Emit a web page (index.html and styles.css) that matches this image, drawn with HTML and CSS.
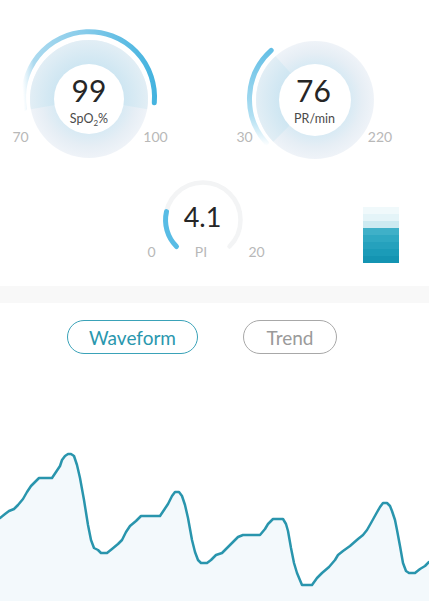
FILE: index.html
```html
<!DOCTYPE html>
<html>
<head>
<meta charset="utf-8">
<link rel="stylesheet" href="styles.css">
</head>
<body>
<div class="row1">
  <svg class="gauge g1" viewBox="9 28 160 147" width="160" height="147">
    <defs>
      <radialGradient id="spBase" gradientUnits="userSpaceOnUse" cx="89" cy="99" r="59">
        <stop offset="0.58" stop-color="#d8eaf4"/>
        <stop offset="0.8" stop-color="#e6eef5"/>
        <stop offset="1" stop-color="#eff3f8"/>
      </radialGradient>
      <radialGradient id="spSec" gradientUnits="userSpaceOnUse" cx="89" cy="99" r="59">
        <stop offset="0.58" stop-color="#cee6f2"/>
        <stop offset="1" stop-color="#e2eef5"/>
      </radialGradient>
      <linearGradient id="spArc" gradientUnits="userSpaceOnUse" x1="24" y1="110" x2="156" y2="100">
        <stop offset="0" stop-color="#b8e0f2" stop-opacity="0"/>
        <stop offset="0.1" stop-color="#acdaef"/>
        <stop offset="0.5" stop-color="#86cbea"/>
        <stop offset="1" stop-color="#44b3df"/>
      </linearGradient>
    </defs>
    <circle cx="89" cy="99" r="59" fill="url(#spBase)"/>
    <path d="M89 99 L30.9 109.2 A59 59 0 1 1 147.1 109.2 Z" fill="url(#spSec)"/>
    <circle cx="89" cy="99" r="35" fill="#fff"/>
    <path d="M24.5 108.4 A65.5 65.5 0 1 1 154.3 102.7" fill="none" stroke="url(#spArc)" stroke-width="5" stroke-linecap="round"/>
    <text class="val" x="89" y="102">99</text>
    <text class="unit" x="89" y="123">SpO<tspan class="sub" dy="3">2</tspan><tspan dy="-3">%</tspan></text>
    <text class="lbl" x="20.5" y="142">70</text>
    <text class="lbl" x="155.5" y="142">100</text>
  </svg>
  <svg class="gauge g2" viewBox="235 28 160 147" width="160" height="147">
    <defs>
      <radialGradient id="prBase" gradientUnits="userSpaceOnUse" cx="315" cy="100" r="59">
        <stop offset="0.6" stop-color="#d8eaf4"/>
        <stop offset="0.8" stop-color="#e6eef5"/>
        <stop offset="1" stop-color="#eff3f8"/>
      </radialGradient>
      <radialGradient id="prSec" gradientUnits="userSpaceOnUse" cx="315" cy="100" r="59">
        <stop offset="0.6" stop-color="#cee6f2"/>
        <stop offset="1" stop-color="#e2eef5"/>
      </radialGradient>
      <linearGradient id="prArc" gradientUnits="userSpaceOnUse" x1="266" y1="146" x2="272" y2="48">
        <stop offset="0" stop-color="#a9dcf0" stop-opacity="0"/>
        <stop offset="0.3" stop-color="#b0dff2"/>
        <stop offset="1" stop-color="#62bee5"/>
      </linearGradient>
    </defs>
    <circle cx="315" cy="100" r="59" fill="url(#prBase)"/>
    <path d="M315 100 L273.3 141.7 A59 59 0 0 1 275.5 56.2 Z" fill="url(#prSec)"/>
    <circle cx="315" cy="100" r="36" fill="#fff"/>
    <path d="M266.3 142.8 A65.5 65.5 0 0 1 271.2 50.3" fill="none" stroke="url(#prArc)" stroke-width="5" stroke-linecap="round"/>
    <text class="val" x="313.5" y="102">76</text>
    <text class="unit" x="314.5" y="123">PR/min</text>
    <text class="lbl" x="244.5" y="142">30</text>
    <text class="lbl" x="380" y="142">220</text>
  </svg>
</div>
<div class="row2">
  <svg class="gauge pi" viewBox="138 175 130 90" width="130" height="90">
    <path d="M176.5 246.5 A37.5 37.5 0 1 1 229.5 246.5" fill="none" stroke="#f3f4f5" stroke-width="4.5" stroke-linecap="round"/>
    <path d="M176.5 246.5 A37.5 37.5 0 0 1 166.5 211.6" fill="none" stroke="#58bce5" stroke-width="5" stroke-linecap="round"/>
    <text class="val pival" x="202.5" y="227">4.1</text>
    <text class="lbl" x="151.5" y="257">0</text>
    <text class="lbl" x="201" y="257">PI</text>
    <text class="lbl" x="256.5" y="257">20</text>
  </svg>
  <div class="colorbar">
    <div class="s s1"></div><div class="s s2"></div><div class="s s3"></div><div class="s s4"></div>
    <div class="s s5"></div><div class="s s6"></div><div class="s s7"></div><div class="s s8"></div>
  </div>
</div>
<div class="band"></div>
<div class="tabs">
  <div class="tab active">Waveform</div>
  <div class="tab">Trend</div>
</div>
<svg class="wave" viewBox="0 354 429 247" width="429" height="247">
  <polygon class="wfill" points="0,518 5,514 9,511 14,509 18,505 23,499 27,492 31,486 35,482 39,478 52,478 56,472 60,466 62,460 65,456 68,454 71,454 74,456 77,465 80,478 84,500 88,525 91,540 94,548 98,550 101,553 107,553 112,549 118,544 122,540 126,532 130,526 136,521 141,516 160,516 164,510 168,504 172,496 175,492 179,492 182,496 185,505 188,518 192,540 195,552 198,560 201,563 207,563 211,560 216,555 222,553 228,547 233,542 238,537 243,535 260,535 265,529 268,524 273,519 283,519 286,524 288,531 291,548 294,563 297,573 302,585 312,585 317,578 322,573 329,567 335,560 338,555 343,551 350,546 358,539 363,535 367,530 371,523 376,514 380,507 383,503 387,503 390,506 392,511 395,520 397,530 400,546 403,563 406,571 409,573 415,573 420,569 425,566 429,562 429,601 0,601"/>
  <polyline class="wline" points="0,518 5,514 9,511 14,509 18,505 23,499 27,492 31,486 35,482 39,478 52,478 56,472 60,466 62,460 65,456 68,454 71,454 74,456 77,465 80,478 84,500 88,525 91,540 94,548 98,550 101,553 107,553 112,549 118,544 122,540 126,532 130,526 136,521 141,516 160,516 164,510 168,504 172,496 175,492 179,492 182,496 185,505 188,518 192,540 195,552 198,560 201,563 207,563 211,560 216,555 222,553 228,547 233,542 238,537 243,535 260,535 265,529 268,524 273,519 283,519 286,524 288,531 291,548 294,563 297,573 302,585 312,585 317,578 322,573 329,567 335,560 338,555 343,551 350,546 358,539 363,535 367,530 371,523 376,514 380,507 383,503 387,503 390,506 392,511 395,520 397,530 400,546 403,563 406,571 409,573 415,573 420,569 425,566 429,562"/>
</svg>
</body>
</html>
```
FILE: styles.css
```css
html, body {
  margin: 0;
  padding: 0;
  background: #ffffff;
}
body {
  width: 429px;
  height: 601px;
  overflow: hidden;
  font-family: Lato, "Noto Sans", "Liberation Sans", sans-serif;
}
.gauge {
  display: block;
  overflow: visible;
}
.row1 {
  display: flex;
  align-items: flex-start;
  padding: 28px 0 0 9px;
  gap: 66px;
  height: 147px;
}
.row2 {
  display: flex;
  align-items: flex-start;
  padding-left: 138px;
  gap: 95px;
  height: 90px;
}
.val {
  font-family: Lato, "Noto Sans", sans-serif;
  font-size: 30px;
  fill: #262626;
  text-anchor: middle;
}
.pival {
  font-size: 27px;
}
.unit {
  font-size: 12.5px;
  fill: #4a4a4a;
  text-anchor: middle;
}
.sub {
  font-size: 8px;
}
.lbl {
  font-size: 14px;
  fill: #b8b8b8;
  text-anchor: middle;
}
.colorbar {
  margin-top: 32px;
  width: 36px;
  height: 56px;
  display: flex;
  flex-direction: column;
}
.s { flex: 1; }
.s1 { background: #f0f9fb; }
.s2 { background: #e4f4f8; }
.s3 { background: #cdeaf1; }
.s4 { background: #3fb0c8; }
.s5 { background: #2fa8c2; }
.s6 { background: #25a1bd; }
.s7 { background: #1b9bb8; }
.s8 { background: #1494b2; }
.band {
  margin-top: 21px;
  height: 17px;
  background: #f8f8f8;
}
.tabs {
  display: flex;
  padding: 17px 0 0 67px;
  gap: 45px;
}
.tab {
  box-sizing: border-box;
  height: 34px;
  width: 94px;
  border: 1.5px solid #a8a8a8;
  border-radius: 17px;
  display: flex;
  align-items: center;
  justify-content: center;
  font-size: 19px;
  color: #9a9a9a;
}
.tab.active {
  width: 131px;
  color: #2a97ae;
  border-color: #3aa2b8;
}
.wave {
  display: block;
}
.wfill {
  fill: #f3f9fc;
}
.wline {
  fill: none;
  stroke: #2995ad;
  stroke-width: 2.5;
  stroke-linejoin: round;
  stroke-linecap: round;
}
```
